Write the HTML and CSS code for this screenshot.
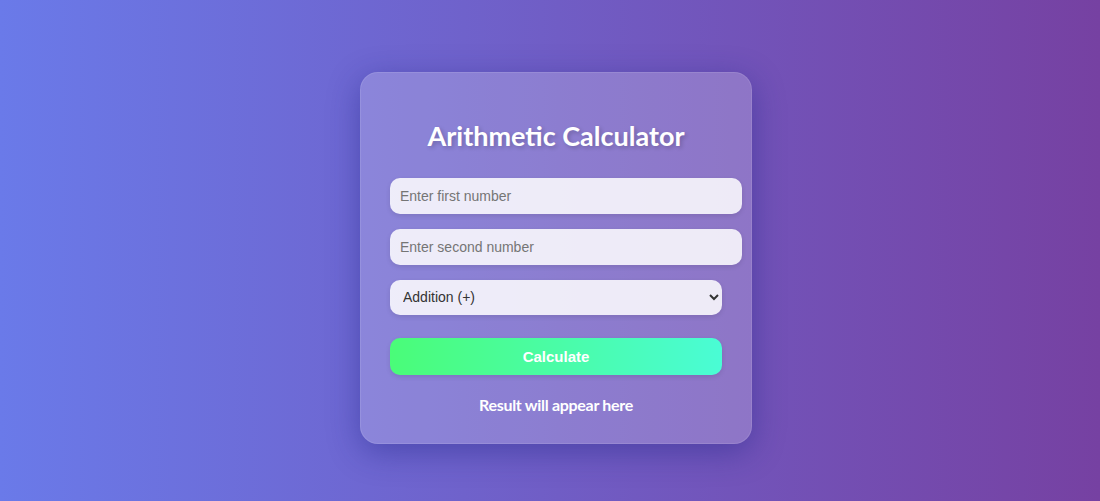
FILE: index.html
```html
<!DOCTYPE html>
<html lang="en">
  <head>
    <meta charset="UTF-8" />
    <meta name="viewport" content="width=device-width, initial-scale=1.0" />
    <title>Arithmetic Calculator</title>
    <link rel="stylesheet" href="styles.css">
  </head>
  <body>
    <div class="calculator">
      <h1>Arithmetic Calculator</h1>
      <input type="number" id="num1" placeholder="Enter first number" />
      <input type="number" id="num2" placeholder="Enter second number" />
      <select id="operation">
        <option value="add">Addition (+)</option>
        <option value="sub">Subtraction (-)</option>
        <option value="mul">Multiplication (×)</option>
        <option value="div">Division (÷)</option>
      </select>
      <button id="calc-btn">Calculate</button>
      <div class="result" id="result">Result will appear here</div>
    </div>

    <script>
      document.getElementById("calc-btn").addEventListener("click", () => {
        const a = parseFloat(document.getElementById("num1").value);
        const b = parseFloat(document.getElementById("num2").value);
        const op = document.getElementById("operation").value;
        const result = document.getElementById("result");

        if (isNaN(a) || isNaN(b)) {
          result.textContent = "Please enter both numbers";
          return;
        }

        let value;
        if (op === "add") value = a + b;
        if (op === "sub") value = a - b;
        if (op === "mul") value = a * b;
        if (op === "div") value = b === 0 ? "Cannot divide by zero" : a / b;

        result.textContent = "Result: " + value;
      });
    </script>
  </body>
</html>
```

FILE: styles.css
```css
body {
  font-family: Lato, "Open Sans", sans-serif;
  background: linear-gradient(to right, #6a7ae9, #7641a2);
  margin: 0;
  padding: 14px 0 0 12px;
  box-sizing: border-box;
  display: flex;
  justify-content: center;
  align-items: center;
  height: 100vh;
}

.calculator {
  width: 392px;
  box-sizing: border-box;
  padding: 30px 29px 27px;
  background: rgba(255, 255, 255, 0.2);
  border: 1px solid rgba(255, 255, 255, 0.1);
  border-radius: 18px;
  box-shadow: 0 8px 32px rgba(31, 38, 135, 0.45);
}

h1 {
  color: white;
  text-align: center;
  font-size: 27px;
  line-height: 38px;
  margin: 14px 0 23px;
  text-shadow: 2px 2px 4px rgba(0, 0, 0, 0.2);
}

input {
  display: block;
  width: 100%;
  padding: 10px;
  margin-bottom: 15px;
  border: none;
  border-radius: 10px;
  font-family: "Liberation Sans", Arial, sans-serif;
  font-size: 14px;
  background: rgba(255, 255, 255, 0.85);
  box-shadow: 0 2px 5px rgba(0, 0, 0, 0.1);
  outline: none;
}

input::placeholder {
  color: #757575;
}

select {
  display: block;
  width: 100%;
  height: 35px;
  padding: 0 9px;
  margin-bottom: 23px;
  border: none;
  border-radius: 10px;
  font-family: "Liberation Sans", Arial, sans-serif;
  font-size: 14px;
  color: #333;
  background: rgba(255, 255, 255, 0.85);
  box-shadow: 0 2px 5px rgba(0, 0, 0, 0.1);
}

button {
  display: block;
  width: 100%;
  height: 37px;
  border: none;
  border-radius: 10px;
  background: linear-gradient(to right, #4afc78, #4afcd5);
  color: white;
  font-family: "Liberation Sans", Arial, sans-serif;
  font-size: 15px;
  font-weight: bold;
  cursor: pointer;
  box-shadow: 0 2px 5px rgba(0, 0, 0, 0.1);
}

.result {
  margin-top: 19px;
  text-align: center;
  color: white;
  font-size: 16px;
  line-height: 22px;
  letter-spacing: -0.3px;
  font-weight: bold;
}
```
